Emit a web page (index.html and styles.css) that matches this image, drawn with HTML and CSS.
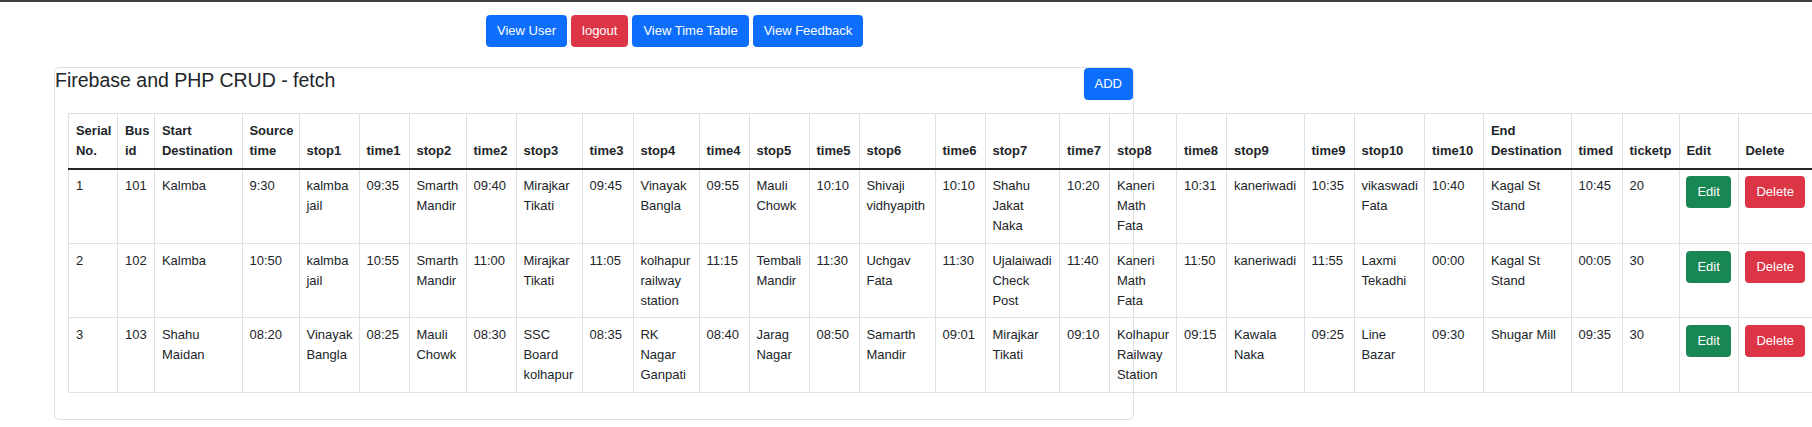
FILE: index.html
```html
<!DOCTYPE html>
<html lang="en">
<head>
<meta charset="utf-8">
<title>Firebase and PHP CRUD - fetch</title>
<link rel="stylesheet" href="styles.css">
</head>
<body>
<div class="topline"></div>
<nav class="nav">
  <a class="btn btn-primary" href="#">View User</a>
  <a class="btn btn-danger" href="#">logout</a>
  <a class="btn btn-primary" href="#">View Time Table</a>
  <a class="btn btn-primary" href="#">View Feedback</a>
</nav>
<div class="card">
  <div class="card-header">
    <h4 class="title">Firebase and PHP CRUD - fetch</h4>
    <a class="btn btn-primary" href="#">ADD</a>
  </div>
  <div class="card-body">
    <table class="table">
      <colgroup>
        <col class="w49"><col class="w37"><col class="w87"><col class="w57">
        <col class="w60"><col class="w50"><col class="w57"><col class="w50">
        <col class="w66"><col class="w51"><col class="w66"><col class="w50">
        <col class="w60"><col class="w50"><col class="w76"><col class="w50">
        <col class="w74"><col class="w50"><col class="w67"><col class="w50">
        <col class="w78"><col class="w50"><col class="w70"><col class="w59">
        <col class="w87"><col class="w51"><col class="w57"><col class="w59">
        <col class="w75">
      </colgroup>
      <thead>
        <tr>
          <th>Serial No.</th><th>Bus id</th><th>Start Destination</th><th>Source time</th>
          <th>stop1</th><th>time1</th><th>stop2</th><th>time2</th><th>stop3</th><th>time3</th>
          <th>stop4</th><th>time4</th><th>stop5</th><th>time5</th><th>stop6</th><th>time6</th>
          <th>stop7</th><th>time7</th><th>stop8</th><th>time8</th><th>stop9</th><th>time9</th>
          <th>stop10</th><th>time10</th><th>End Destination</th><th>timed</th><th>ticketp</th>
          <th>Edit</th><th>Delete</th>
        </tr>
      </thead>
      <tbody>
        <tr>
          <td>1</td><td>101</td><td>Kalmba</td><td>9:30</td>
          <td>kalmba jail</td><td>09:35</td><td>Smarth Mandir</td><td>09:40</td>
          <td>Mirajkar Tikati</td><td>09:45</td><td>Vinayak Bangla</td><td>09:55</td>
          <td>Mauli Chowk</td><td>10:10</td><td>Shivaji vidhyapith</td><td>10:10</td>
          <td>Shahu Jakat Naka</td><td>10:20</td><td>Kaneri Math Fata</td><td>10:31</td>
          <td>kaneriwadi</td><td>10:35</td><td>vikaswadi Fata</td><td>10:40</td>
          <td>Kagal St Stand</td><td>10:45</td><td>20</td>
          <td><a class="btn btn-success" href="#">Edit</a></td>
          <td><a class="btn btn-danger" href="#">Delete</a></td>
        </tr>
        <tr>
          <td>2</td><td>102</td><td>Kalmba</td><td>10:50</td>
          <td>kalmba jail</td><td>10:55</td><td>Smarth Mandir</td><td>11:00</td>
          <td>Mirajkar Tikati</td><td>11:05</td><td>kolhapur railway station</td><td>11:15</td>
          <td>Tembali Mandir</td><td>11:30</td><td>Uchgav Fata</td><td>11:30</td>
          <td>Ujalaiwadi Check Post</td><td>11:40</td><td>Kaneri Math Fata</td><td>11:50</td>
          <td>kaneriwadi</td><td>11:55</td><td>Laxmi Tekadhi</td><td>00:00</td>
          <td>Kagal St Stand</td><td>00:05</td><td>30</td>
          <td><a class="btn btn-success" href="#">Edit</a></td>
          <td><a class="btn btn-danger" href="#">Delete</a></td>
        </tr>
        <tr>
          <td>3</td><td>103</td><td>Shahu Maidan</td><td>08:20</td>
          <td>Vinayak Bangla</td><td>08:25</td><td>Mauli Chowk</td><td>08:30</td>
          <td>SSC Board kolhapur</td><td>08:35</td><td>RK Nagar Ganpati</td><td>08:40</td>
          <td>Jarag Nagar</td><td>08:50</td><td>Samarth Mandir</td><td>09:01</td>
          <td>Mirajkar Tikati</td><td>09:10</td><td>Kolhapur Railway Station</td><td>09:15</td>
          <td>Kawala Naka</td><td>09:25</td><td>Line Bazar</td><td>09:30</td>
          <td>Shugar Mill</td><td>09:35</td><td>30</td>
          <td><a class="btn btn-success" href="#">Edit</a></td>
          <td><a class="btn btn-danger" href="#">Delete</a></td>
        </tr>
      </tbody>
    </table>
  </div>
</div>
</body>
</html>
```
FILE: styles.css
```css
html, body {
  overflow: hidden;
}
body {
  margin: 0;
  background: #fff;
  color: #212529;
  font-family: "Liberation Sans", Arial, sans-serif;
  font-size: 13px;
  line-height: 20px;
}
.topline {
  height: 2px;
  background: #404040;
}
.nav {
  display: flex;
  gap: 4px;
  padding: 13px 0 0 486px;
}
.btn {
  display: inline-block;
  padding: 5px 10px;
  border: 1px solid transparent;
  border-radius: 3.5px;
  color: #fff;
  font-size: 13px;
  line-height: 20px;
  text-decoration: none;
  white-space: nowrap;
}
.btn-primary { background: #0d6efd; border-color: #0d6efd; }
.btn-danger { background: #dc3545; border-color: #dc3545; }
.btn-success { background: #198754; border-color: #198754; }

.card {
  width: 1078px;
  margin: 20px 0 0 54px;
  border: 1px solid #dfdfdf;
  border-radius: 5px;
}
.card-header {
  display: flex;
  justify-content: space-between;
  align-items: flex-start;
}
.title {
  margin: 0;
  font-size: 19.5px;
  line-height: 24px;
  font-weight: 400;
  color: #212529;
}
.card-body {
  padding: 13.3px;
}
.table {
  table-layout: fixed;
  width: 1745px;
  border-collapse: collapse;
  margin-bottom: 13.3px;
  color: #212529;
}
.table th,
.table td {
  border: 1px solid #dee2e6;
  padding: 6.67px;
  text-align: left;
  vertical-align: top;
}
.table th {
  font-weight: 700;
  vertical-align: bottom;
  border-bottom: 2px solid #212529;
}
.w37 { width: 37px; }
.w49 { width: 49px; }
.w50 { width: 50px; }
.w51 { width: 51px; }
.w57 { width: 57px; }
.w59 { width: 59px; }
.w60 { width: 60px; }
.w66 { width: 66px; }
.w67 { width: 67px; }
.w70 { width: 70.5px; }
.w74 { width: 74.5px; }
.w75 { width: 75px; }
.w76 { width: 76px; }
.w78 { width: 77.5px; }
.w87 { width: 87.5px; }
```
